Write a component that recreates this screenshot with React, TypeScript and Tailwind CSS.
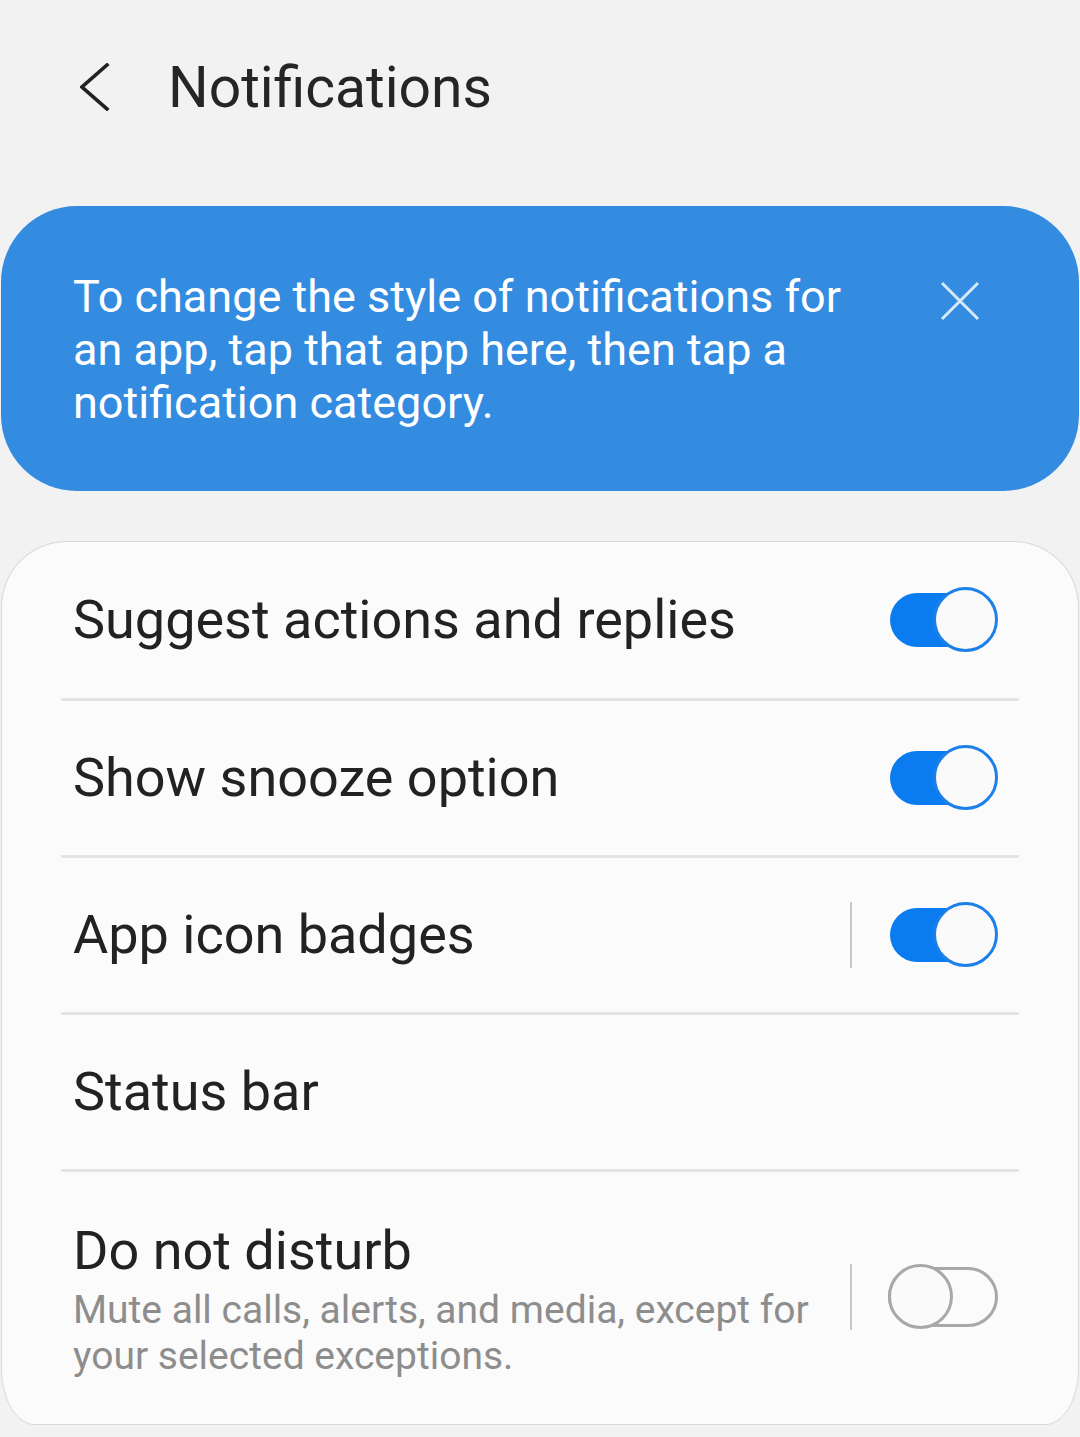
import React from "react";

function Toggle({ on }: { on: boolean }) {
  if (on) {
    return (
      <div className="relative w-[108px] h-[66px] shrink-0">
        <div className="absolute left-0 top-[6px] w-[92px] h-[54px] rounded-full bg-[#0a7cf0]" />
        <div className="absolute right-0 top-0 w-[65px] h-[65px] rounded-full border-[3px] border-[#1c80e8] bg-[#fafafa]" />
      </div>
    );
  }
  return (
    <div className="relative w-[110px] h-[66px] shrink-0">
      <div className="absolute left-0 top-[3px] w-[110px] h-[60px] rounded-full border-[3px] border-[#a8a8a8]" />
      <div className="absolute left-0 top-0 w-[65px] h-[65px] rounded-full border-[3px] border-[#a8a8a8] bg-[#fafafa]" />
    </div>
  );
}

function Divider() {
  return <div className="mx-[59px] h-[3px] bg-[#e4e4e4]" />;
}

function Row({
  title,
  toggle,
  split,
  first,
}: {
  title: string;
  toggle?: boolean;
  split?: boolean;
  first?: boolean;
}) {
  return (
    <div className={`${first ? "h-[156px]" : "h-[154px]"} flex items-center pl-[71px] pr-[80px]`}>
      <div className="flex-1 text-[54px] text-[#222222] leading-none">{title}</div>
      {split && <div className="w-[2px] h-[66px] bg-[#c6c6c6] mr-[38px]" />}
      {toggle !== undefined && <Toggle on={toggle} />}
    </div>
  );
}

export default function App() {
  return (
    <div
      className="w-[1080px] h-[1437px] bg-[#f2f2f2] overflow-hidden"
      style={{ fontFamily: "Roboto, 'Noto Sans', sans-serif" }}
    >
      {/* header */}
      <div className="h-[174px] flex items-center pl-[80px]">
        <svg width="30" height="48" viewBox="0 0 30 48" className="mr-[58px]">
          <polyline
            points="27,2 2,24 27,46"
            fill="none"
            stroke="#222222"
            strokeWidth="3.6"
            strokeLinecap="square"
          />
        </svg>
        <div className="text-[57px] text-[#252525] leading-none">Notifications</div>
      </div>

      <div className="pt-[32px] px-[1px]">
        {/* banner */}
        <div className="h-[285px] rounded-[76px] bg-[#348ce1] flex pl-[72px] pr-[98px]">
          <div className="flex-1 pt-[64px] text-white text-[45px] leading-[53px]">
            <div className="whitespace-nowrap">To change the style of notifications for</div>
            <div className="whitespace-nowrap">an app, tap that app here, then tap a</div>
            <div className="whitespace-nowrap">notification category.</div>
          </div>
          <svg width="42" height="42" viewBox="0 0 42 42" className="mt-[74px]">
            <path d="M3 3 L39 39 M39 3 L3 39" stroke="#d6e9fb" strokeWidth="3" fill="none" />
          </svg>
        </div>

        {/* settings card */}
        <div className="mt-[50px] h-[884px] bg-[#fbfbfb] border border-[#d9d9d9] rounded-t-[66px] rounded-bl-[34px_56px] rounded-br-[34px_56px] overflow-hidden">
          <Row title="Suggest actions and replies" toggle={true} first />
          <Divider />
          <Row title="Show snooze option" toggle={true} />
          <Divider />
          <Row title="App icon badges" toggle={true} split />
          <Divider />
          <Row title="Status bar" />
          <Divider />
          <div className="h-[250px] flex items-center pl-[71px] pr-[80px]">
            <div className="flex-1 mt-[6px]">
              <div className="text-[54px] text-[#222222] leading-[60px]">Do not disturb</div>
              <div className="mt-[6px] text-[39px] text-[#8d8d8d] leading-[46px]">
                Mute all calls, alerts, and media, except for
                <br />
                your selected exceptions.
              </div>
            </div>
            <div className="w-[2px] h-[66px] bg-[#c6c6c6] mr-[36px]" />
            <Toggle on={false} />
          </div>
        </div>
      </div>
    </div>
  );
}
